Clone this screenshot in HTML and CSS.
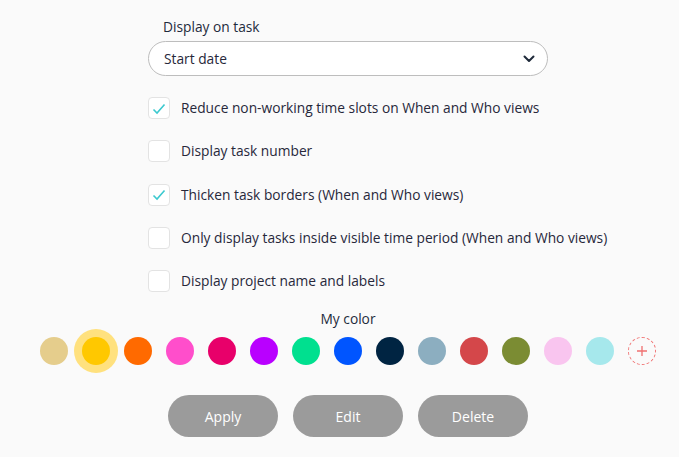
FILE: index.html
```html
<!DOCTYPE html>
<html>
<head>
<meta charset="utf-8">
<link rel="stylesheet" href="styles.css">
</head>
<body>
<div class="wrap">
  <div class="form">
    <div class="label">Display on task</div>
    <div class="select">
      <span>Start date</span>
      <svg class="chev" width="12" height="8" viewBox="0 0 12 8"><path d="M1.5 1.5 L6 6 L10.5 1.5" fill="none" stroke="#1f2a3a" stroke-width="2" stroke-linecap="round" stroke-linejoin="round"/></svg>
    </div>
    <div class="checks">
      <div class="row"><span class="box"><svg width="14" height="12" viewBox="0 0 14 12"><path d="M1.5 6.5 L5 10 L12.5 1.5" fill="none" stroke="#3cc9cf" stroke-width="1.6"/></svg></span><span class="txt">Reduce non-working time slots on When and Who views</span></div>
      <div class="row"><span class="box"></span><span class="txt">Display task number</span></div>
      <div class="row"><span class="box"><svg width="14" height="12" viewBox="0 0 14 12"><path d="M1.5 6.5 L5 10 L12.5 1.5" fill="none" stroke="#3cc9cf" stroke-width="1.6"/></svg></span><span class="txt">Thicken task borders (When and Who views)</span></div>
      <div class="row"><span class="box"></span><span class="txt">Only display tasks inside visible time period (When and Who views)</span></div>
      <div class="row"><span class="box"></span><span class="txt">Display project name and labels</span></div>
    </div>
  </div>
  <div class="mycolor">My color</div>
  <div class="colors">
    <span class="dot c1"></span>
    <span class="dot sel c2"></span>
    <span class="dot c3"></span>
    <span class="dot c4"></span>
    <span class="dot c5"></span>
    <span class="dot c6"></span>
    <span class="dot c7"></span>
    <span class="dot c8"></span>
    <span class="dot c9"></span>
    <span class="dot c10"></span>
    <span class="dot c11"></span>
    <span class="dot c12"></span>
    <span class="dot c13"></span>
    <span class="dot c14"></span>
    <span class="dot add"><svg width="12" height="12" viewBox="0 0 12 12"><path d="M6 1 V11 M1 6 H11" stroke="#f07070" stroke-width="1.3"/></svg></span>
  </div>
  <div class="buttons">
    <button class="btn">Apply</button>
    <button class="btn">Edit</button>
    <button class="btn">Delete</button>
  </div>
</div>
</body>
</html>
```
FILE: styles.css
```css
html, body {
  margin: 0;
  padding: 0;
  background: #fafafa;
}
body {
  font-family: "Open Sans", "Noto Sans", sans-serif;
  font-size: 13.75px;
  color: #27283a;
  width: 679px;
  height: 457px;
  overflow: hidden;
}
.wrap {
  width: 616px;
  margin-left: 40px;
  padding-top: 18px;
  display: flex;
  flex-direction: column;
  align-items: center;
}
.form {
  width: 400px;
  display: flex;
  flex-direction: column;
}
.label {
  padding-left: 15px;
  line-height: 18px;
  color: #1e2b3c;
  margin-bottom: 5px;
}
.select {
  height: 33px;
  border: 1px solid #bdbdbd;
  border-radius: 18px;
  background: #fff;
  display: flex;
  align-items: center;
  justify-content: space-between;
  padding: 0 12px 0 15px;
  color: #27283a;
}
.select span { margin-top: -1px; }
.chev { display: block; margin-top: 1px; }
.checks {
  margin-top: 21px;
  display: flex;
  flex-direction: column;
  gap: 21.3px;
}
.row {
  display: flex;
  align-items: center;
  height: 22px;
  white-space: nowrap;
}
.box {
  width: 20px;
  height: 20px;
  border: 1px solid #e3e3e3;
  border-radius: 4px;
  background: #fff;
  display: flex;
  align-items: center;
  justify-content: center;
  margin-right: 11px;
  flex: none;
}
.box svg { display: block; margin-top: 1px; }
.txt { line-height: 18px; }
.mycolor {
  margin-top: 18px;
  line-height: 18px;
  color: #1e2b3c;
}
.colors {
  margin-top: 1px;
  display: flex;
  gap: 14px;
  align-items: center;
  height: 44px;
}
.dot {
  width: 28px;
  height: 28px;
  border-radius: 50%;
  flex: none;
  box-sizing: border-box;
}
.dot.sel { box-shadow: 0 0 0 8px #ffe17e; }
.c1 { background: #e5cd8c; }
.c2 { background: #ffc800; }
.c3 { background: #ff6a00; }
.c4 { background: #ff4ecb; }
.c5 { background: #e8006a; }
.c6 { background: #b900ff; }
.c7 { background: #00e08f; }
.c8 { background: #0055ff; }
.c9 { background: #002442; }
.c10 { background: #8caec0; }
.c11 { background: #d4474a; }
.c12 { background: #7b8c33; }
.c13 { background: #f9c5ef; }
.c14 { background: #a6e8ec; }
.add {
  border: 1px dashed #f07878;
  background: transparent;
  display: flex;
  align-items: center;
  justify-content: center;
}
.add svg { display: block; }
.buttons {
  margin-top: 22px;
  display: flex;
  gap: 15px;
}
.btn {
  width: 110px;
  height: 42px;
  border: none;
  border-radius: 21px;
  background: #9b9b9b;
  color: #fff;
  font-family: "Open Sans", "Noto Sans", sans-serif;
  font-size: 14px;
  padding: 0;
}
```
